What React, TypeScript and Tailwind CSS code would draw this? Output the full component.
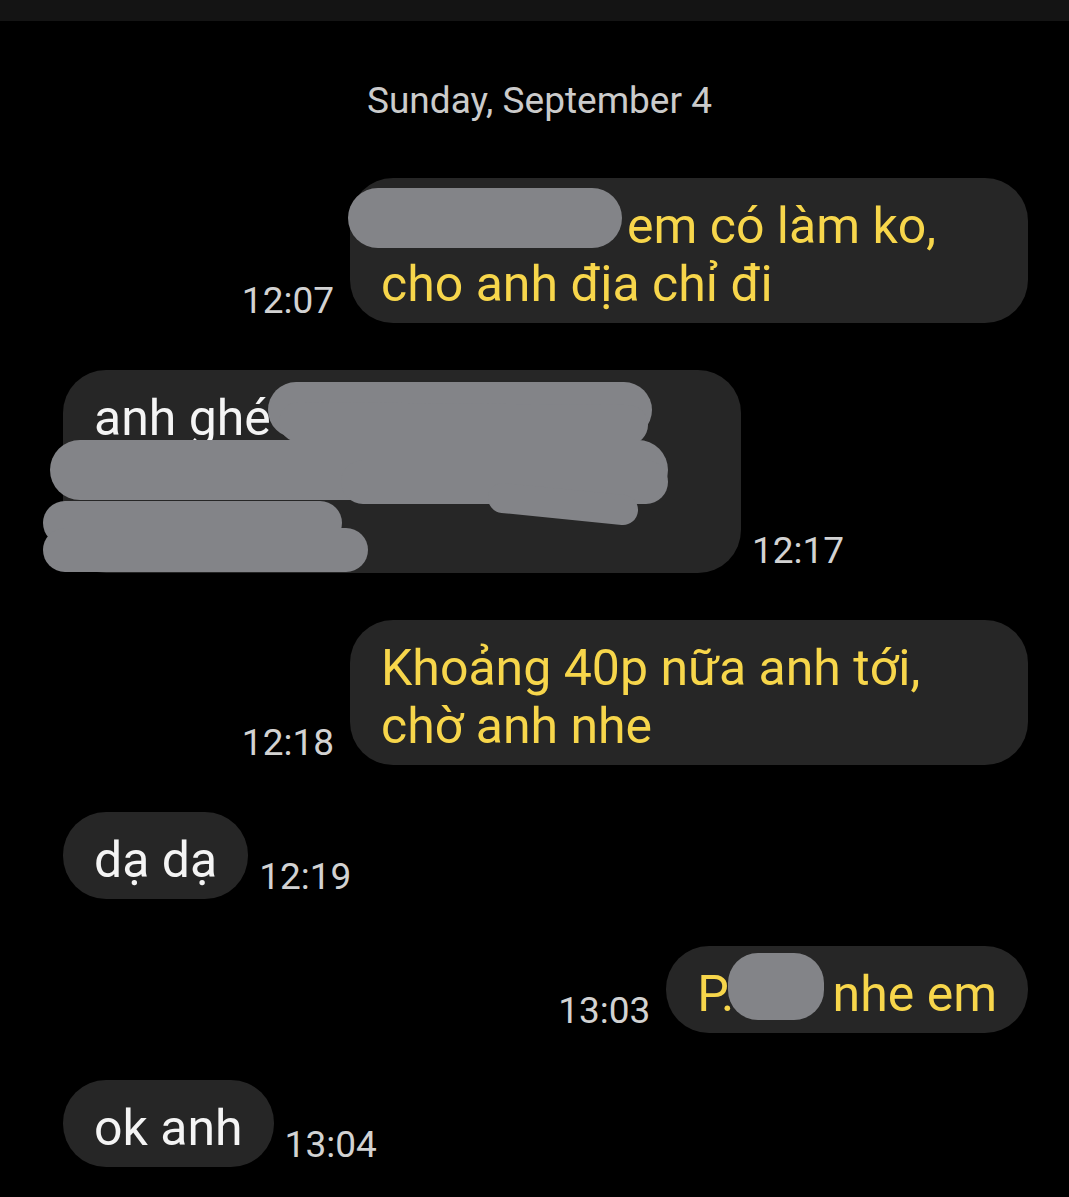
import React, { FC, ReactNode } from 'react'

const font = { fontFamily: 'Roboto, "Noto Sans", sans-serif' }

const Time: FC<{ t: string }> = ({ t }) => (
  <div className="text-[37px] leading-[36px] mb-[4px] text-[#d2d2d2] shrink-0">{t}</div>
)

const Bubble: FC<{ sent?: boolean; className?: string; children: ReactNode }> = ({ sent, className = '', children }) => (
  <div
    className={`relative bg-[#262626] rounded-[43px] px-[31px] pt-[19px] pb-[10px] text-[50px] leading-[58px] max-w-[678px] ${
      sent ? 'text-[#f7d64b]' : 'text-[#f4f4f4]'
    } ${className}`}
  >
    {children}
  </div>
)

const Sent: FC<{ time: string; className?: string; children: ReactNode }> = ({ time, className, children }) => (
  <div className="flex items-end justify-end gap-[16px] pr-[41px]">
    <Time t={time} />
    <Bubble sent className={className}>{children}</Bubble>
  </div>
)

const Received: FC<{ time: string; className?: string; children: ReactNode }> = ({ time, className, children }) => (
  <div className="flex items-end justify-start gap-[11px] pl-[63px]">
    <Bubble className={className}>{children}</Bubble>
    <Time t={time} />
  </div>
)

// gray marker blob hiding part of a message
const Redact: FC<{ w: number; h: number; left: number; top: number }> = ({ w, h, left, top }) => (
  <span
    className="absolute bg-[#838488] rounded-[30px]"
    style={{ width: w, height: h, left, top }}
  />
)

const App: FC = () => {
  return (
    <div className="min-h-screen bg-black" style={font}>
      <div className="h-[21px] bg-[#141414]" />
      <div className="pt-[58px] pl-[10px] h-[102px] text-center text-[37px] leading-[44px] text-[#cbcbcb]">
        Sunday, September 4
      </div>

      <div className="mt-[55px] flex flex-col gap-[47px]">
        <Sent time="12:07" className="w-[678px]">
          <span className="relative inline-block w-[246px] h-[1px]">
            <Redact w={274} h={60} left={-33} top={-54} />
          </span>
          em có làm ko,
          <br />
          cho anh địa chỉ đi
        </Sent>

        <Received time="12:17" className="w-[678px]">
          anh ghé
          <br />
          &nbsp;
          <br />
          &nbsp;
          <svg
            className="absolute left-0 top-0 overflow-visible pointer-events-none"
            width="678"
            height="203"
            fill="none"
            stroke="#838488"
            strokeLinecap="round"
          >
            <path d="M233 40 L561 40" strokeWidth="56" />
            <path d="M236 52 L565 55" strokeWidth="40" />
            <path d="M17 100 L575 100" strokeWidth="60" />
            <path d="M300 112 L583 112" strokeWidth="44" />
            <path d="M440 128 L560 140" strokeWidth="30" />
            <path d="M2 153 L257 153" strokeWidth="44" />
            <path d="M2 180 L283 180" strokeWidth="44" />
          </svg>
        </Received>

        <Sent time="12:18" className="w-[678px]">
          Khoảng 40p nữa anh tới,
          <br />
          chờ anh nhe
        </Sent>

        <Received time="12:19">dạ dạ</Received>

        <Sent time="13:03">
          P.
          <span className="relative inline-block w-[86px] h-[1px]">
            <Redact w={96} h={67} left={-6} top={-57} />
          </span>
          {' '}nhe em
        </Sent>

        <Received time="13:04">ok anh</Received>
      </div>
    </div>
  )
}

export default App
